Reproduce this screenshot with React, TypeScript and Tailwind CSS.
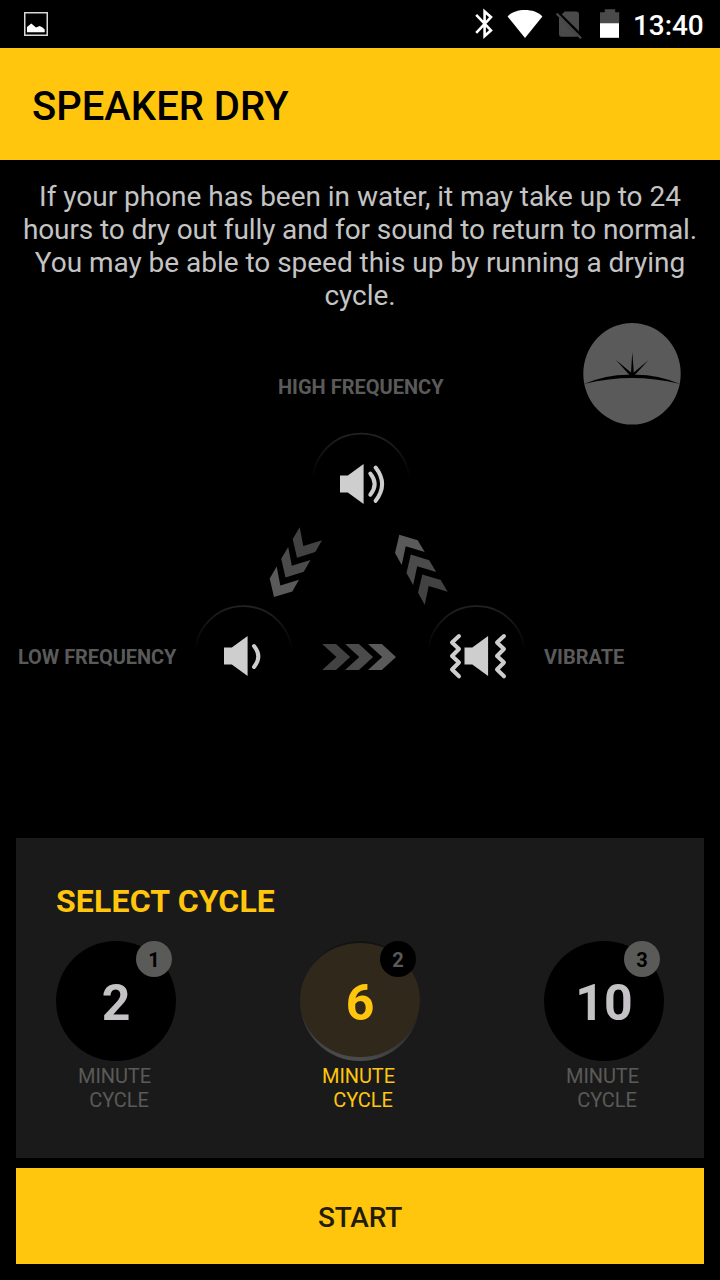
import React from 'react';
import clsx from 'clsx';

type Cycle = { minutes: number; badge: number; selected?: boolean };

const cycles: Cycle[] = [
  { minutes: 2, badge: 1 },
  { minutes: 6, badge: 2, selected: true },
  { minutes: 10, badge: 3 },
];

const arrowShades = ['#424242', '#4b4b4b', '#5a5a5a'];

const StatusBar = () => (
  <div className="flex h-12 items-center justify-between pr-4 pl-6">
    <svg width="24" height="24" viewBox="0 0 24 24">
      <rect x="0.75" y="0.75" width="22.5" height="22.5" fill="none" stroke="#d8d8d8" strokeWidth="1.5" />
      <path d="M3 20.3V15l4.3-3.6 4.7 4.2 3.6-1.6 2.6 1.2 2.5 2.3v2.8z" fill="#fff" />
    </svg>
    <svg width="146" height="48" viewBox="474 0 146 48" className="ml-auto">
      <path d="M476.2 14.8 491 30.3 484.6 36V11.5L491 17.2 476.2 32.8" fill="none" stroke="#fff" strokeWidth="2.6" />
      <path d="M525 38 507.6 16.4C512 12 518 10 525 10s13 2 17.4 6.4z" fill="#fff" />
      <path d="M564.8 11.5H576a3 3 0 0 1 3 3v16.8l-17.3-17.1zM559 17v17a2.7 2.7 0 0 0 2.7 2.7h16.5z" fill="#4a4a4a" />
      <path d="M556.6 13.6 581 38.2" stroke="#4a4a4a" strokeWidth="2.1" />
      <path d="M604.8 9.3h10.4v2.9h4v11H600v-11h4.8z" fill="#4a4a4a" />
      <path d="M600 23.2h19v14.6h-19z" fill="#fff" />
    </svg>
    <span className="ml-[13px] w-[71px] pt-1 text-[28px] leading-8 font-medium tracking-[-0.1px] text-white">13:40</span>
  </div>
);

const Speaker = ({ x, y }: { x: number; y: number }) => (
  <path transform={`translate(${x} ${y})`} d="M0 11.5H7.8L23.6 0V40L7.8 28.5H0z" fill="#cecece" />
);

const Ring = ({ cx, cy }: { cx: number; cy: number }) => (
  <path
    transform={`translate(${cx} ${cy})`}
    d="M-48.3 0a48.3 48.3 0 0 1 96.6 0"
    fill="none"
    stroke="url(#ring)"
    strokeWidth="1.8"
  />
);

const Diagram = () => (
  <div className="relative h-[526px]">
    <svg width="720" height="526" viewBox="0 312 720 526" className="block">
      <defs>
        <linearGradient id="ring" x1="0" y1="0" x2="0" y2="1">
          <stop offset="0" stopColor="#222" />
          <stop offset="0.9" stopColor="#000" />
        </linearGradient>
      </defs>

      {/* brand mark */}
      <ellipse cx="632" cy="373.7" rx="48.7" ry="50.8" fill="#5a5a5a" />
      <path
        d="M584 383.9Q607 374.4 629.2 374.7L616 360 631 372.4 632.3 352 633.8 372.4 648.6 360 635 374.7Q657 374.4 680 383.9 655 378 632 378 609 378 584 383.9z"
        fill="#000"
      />

      <Ring cx={361} cy={482} />
      <Ring cx={243.5} cy={654.5} />
      <Ring cx={476.5} cy={654.5} />

      <Speaker x={340} y={464} />
      <g fill="none" stroke="#cecece" strokeWidth="4" strokeLinecap="round" strokeLinejoin="round">
        <path d="M370.3 473.5Q379 484 370.3 494.7" />
        <path d="M375.6 467.5Q388.6 484 375.6 500.8" />
        <path d="M254 646Q262.6 656.5 254 667" />
        <path d="M459 636 452 642.5 459 649 452 656 459 662.5 452 669.5 459 676.3" />
        <path d="M504 636 497 642.5 504 649 497 656 504 662.5 497 669.5 504 676.3" />
      </g>
      <Speaker x={224} y={636} />
      <Speaker x={464.5} y={636} />

      {arrowShades.map((fill, i) => (
        <g key={fill} fill={fill}>
          <path
            transform={`translate(${i * -11.5} ${i * 19.7})`}
            d="M299.7 527.2 303.3 546 322 540.3 315.3 552 297 557.7 292.7 539z"
          />
          <path transform={`translate(${i * 22.9} 0)`} d="M322.2 644H336L350.2 657 336 670H322.2L336.4 657z" />
          <path
            transform={`translate(${(2 - i) * 11.5} ${(2 - i) * 19.9})`}
            d="M399.3 534.7 417.7 540.3 424.7 552 405.7 546.3 401.7 565 395 553z"
          />
        </g>
      ))}
    </svg>
    <span className="absolute top-[63px] left-[278px] text-xl leading-6 font-bold whitespace-nowrap text-[#5a5a5a]">
      HIGH FREQUENCY
    </span>
    <span className="absolute top-[333px] left-[18px] text-xl leading-6 font-bold tracking-[-0.07px] whitespace-nowrap text-[#5a5a5a]">
      LOW FREQUENCY
    </span>
    <span className="absolute top-[333px] left-[544px] text-xl leading-6 font-bold whitespace-nowrap text-[#5a5a5a]">
      VIBRATE
    </span>
  </div>
);

const CycleButton = ({ minutes, badge, selected }: Cycle) => (
  <button className="flex w-[120px] flex-col items-center">
    <span
      className={clsx(
        'relative flex h-[120px] w-[120px] items-center justify-center rounded-full text-[50px] font-bold',
        selected
          ? 'bg-linear-[10deg,#555_0%,#444_14%,#1a1a1a_50%,#111_100%] text-[#ffc60d]'
          : 'bg-black text-[#c4c2c4]',
      )}
    >
      {selected && <span className="absolute inset-x-0 top-0.5 bottom-1 rounded-[50%] bg-[#2f281b]" />}
      <span className="relative pt-1">{minutes}</span>
      <span
        className={clsx(
          'absolute top-0 right-1 flex h-9 w-9 items-center justify-center rounded-full pt-0.5 text-xl leading-6 font-bold',
          selected ? 'bg-black text-[#5a5a5a]' : 'bg-[#5a5a58] text-black',
        )}
      >
        {badge}
      </span>
    </span>
    <span
      className={clsx(
        'mt-[3px] flex flex-col items-center text-xl leading-6 tracking-[-0.1px]',
        selected ? 'text-[#ffc60d]' : 'text-[#5a5a58]',
      )}
    >
      <span className="pr-[3px]">MINUTE</span>
      <span className="pl-1.5">CYCLE</span>
    </span>
  </button>
);

export default function App() {
  return (
    <div className="flex h-[1280px] w-[720px] flex-col overflow-hidden bg-black font-[Roboto,sans-serif]">
      <StatusBar />
      <header className="flex h-28 items-center bg-[#ffc60d] px-8 pt-1.5">
        <h1 className="text-[40px] leading-none font-medium text-black">SPEAKER DRY</h1>
      </header>
      <p className="h-[152px] pt-5 text-center text-[28px] leading-[33px] tracking-[-0.03px] text-[#c4c4c4]">
        If your phone has been in water, it may take up to 24
        <br />
        <span className="tracking-[-0.11px]">hours to dry out fully and for sound to return to normal.</span>
        <br />
        You may be able to speed this up by running a drying
        <br />
        cycle.
      </p>
      <Diagram />
      <section className="mx-4 h-80 bg-[#1a1a1a] px-10 pt-[43px]">
        <h2 className="text-[32px] leading-10 font-bold tracking-[0.17px] text-[#ffc60d]">SELECT CYCLE</h2>
        <div className="mt-5 flex justify-between">
          {cycles.map((cycle) => (
            <CycleButton key={cycle.badge} {...cycle} />
          ))}
        </div>
      </section>
      <button className="mx-4 mt-2.5 h-24 bg-[#ffc60d] pt-1 text-[28px] font-medium tracking-[-0.2px] text-[#231c06]">
        START
      </button>
    </div>
  );
}
